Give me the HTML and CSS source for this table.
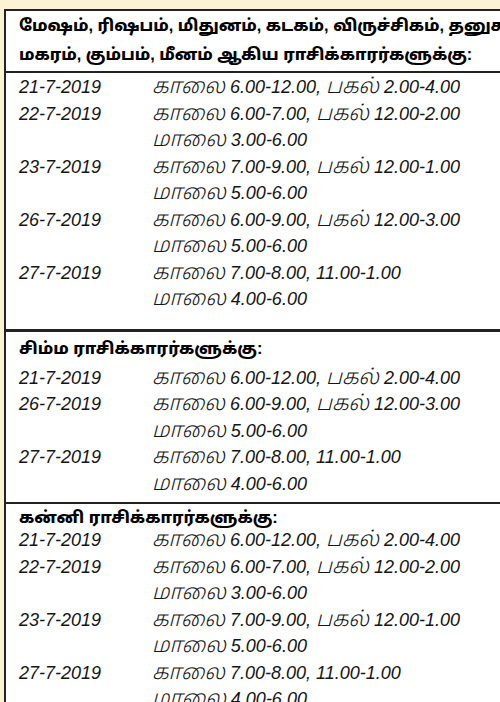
FILE: index.html
```html
<!DOCTYPE html>
<html lang="ta">
<head>
<meta charset="utf-8">
<link rel="stylesheet" href="styles.css">
</head>
<body>
<div class="page">
  <div class="box">
    <section class="sec sec1">
      <h2 class="head head1">மேஷம், ரிஷபம், மிதுனம், கடகம், விருச்சிகம், தனுசு<br>மகரம், கும்பம், மீனம் ஆகிய ராசிக்காரர்களுக்கு:</h2>
      <div class="rows">
        <span class="d">21-7-2019</span><span class="t"><span class="tw">காலை</span> 6.00-12.00, <span class="tw">பகல்</span> 2.00-4.00</span>
        <span class="d">22-7-2019</span><span class="t"><span class="tw">காலை</span> 6.00-7.00, <span class="tw">பகல்</span> 12.00-2.00</span>
        <span class="d"></span><span class="t"><span class="tw">மாலை</span> 3.00-6.00</span>
        <span class="d">23-7-2019</span><span class="t"><span class="tw">காலை</span> 7.00-9.00, <span class="tw">பகல்</span> 12.00-1.00</span>
        <span class="d"></span><span class="t"><span class="tw">மாலை</span> 5.00-6.00</span>
        <span class="d">26-7-2019</span><span class="t"><span class="tw">காலை</span> 6.00-9.00, <span class="tw">பகல்</span> 12.00-3.00</span>
        <span class="d"></span><span class="t"><span class="tw">மாலை</span> 5.00-6.00</span>
        <span class="d">27-7-2019</span><span class="t"><span class="tw">காலை</span> 7.00-8.00, 11.00-1.00</span>
        <span class="d"></span><span class="t"><span class="tw">மாலை</span> 4.00-6.00</span>
      </div>
    </section>
    <section class="sec sec2">
      <h2 class="head">சிம்ம ராசிக்காரர்களுக்கு:</h2>
      <div class="rows">
        <span class="d">21-7-2019</span><span class="t"><span class="tw">காலை</span> 6.00-12.00, <span class="tw">பகல்</span> 2.00-4.00</span>
        <span class="d">26-7-2019</span><span class="t"><span class="tw">காலை</span> 6.00-9.00, <span class="tw">பகல்</span> 12.00-3.00</span>
        <span class="d"></span><span class="t"><span class="tw">மாலை</span> 5.00-6.00</span>
        <span class="d">27-7-2019</span><span class="t"><span class="tw">காலை</span> 7.00-8.00, 11.00-1.00</span>
        <span class="d"></span><span class="t"><span class="tw">மாலை</span> 4.00-6.00</span>
      </div>
    </section>
    <section class="sec sec3">
      <h2 class="head">கன்னி ராசிக்காரர்களுக்கு:</h2>
      <div class="rows">
        <span class="d">21-7-2019</span><span class="t"><span class="tw">காலை</span> 6.00-12.00, <span class="tw">பகல்</span> 2.00-4.00</span>
        <span class="d">22-7-2019</span><span class="t"><span class="tw">காலை</span> 6.00-7.00, <span class="tw">பகல்</span> 12.00-2.00</span>
        <span class="d"></span><span class="t"><span class="tw">மாலை</span> 3.00-6.00</span>
        <span class="d">23-7-2019</span><span class="t"><span class="tw">காலை</span> 7.00-9.00, <span class="tw">பகல்</span> 12.00-1.00</span>
        <span class="d"></span><span class="t"><span class="tw">மாலை</span> 5.00-6.00</span>
        <span class="d">27-7-2019</span><span class="t"><span class="tw">காலை</span> 7.00-8.00, 11.00-1.00</span>
        <span class="d"></span><span class="t"><span class="tw">மாலை</span> 4.00-6.00</span>
      </div>
    </section>
  </div>
</div>
</body>
</html>
```
FILE: styles.css
```css
html, body {
  margin: 0;
  padding: 0;
  background: #fbf3d3;
  overflow: hidden;
}
body {
  width: 500px;
  height: 702px;
  font-family: "Liberation Sans", "Noto Sans Tamil", "Noto Sans", sans-serif;
  color: #151515;
}
.page {
  padding: 9px 0 0 4px;
}
.box {
  width: 540px;
  background: #ffffff;
  border-left: 2px solid #222;
  border-top: 2px solid #222;
}
.sec {
  display: flex;
  flex-direction: column;
}
.sec2 {
  border-top: 3px solid #222;
}
.sec3 {
  border-top: 2px solid #222;
}
.head {
  margin: 0;
  padding: 2px 0 2px 13px;
  font-size: 16.3px;
  font-weight: 800;
  line-height: 29px;
  white-space: nowrap;
  color: #000;
}
.head1 {
  border-bottom: 2px solid #222;
  padding-top: 0;
  padding-bottom: 2px;
}
.rows {
  display: grid;
  grid-template-columns: 133px 1fr;
  grid-auto-rows: 26.5px;
  padding-left: 13px;
  font-size: 18px;
  font-style: italic;
  line-height: 26.5px;
}
.sec1 .rows {
  padding-top: 1px;
  padding-bottom: 16px;
}
.sec2 .rows {
  padding-bottom: 5px;
}
.sec3 .head {
  padding-top: 0;
  padding-bottom: 0;
  line-height: 27px;
}
.sec3 .rows {
  margin-top: -4px;
}
.t {
  white-space: nowrap;
  font-size: 18px;
}
.tw {
  font-size: 21px;
  line-height: 1;
  font-weight: 300;
}
```
